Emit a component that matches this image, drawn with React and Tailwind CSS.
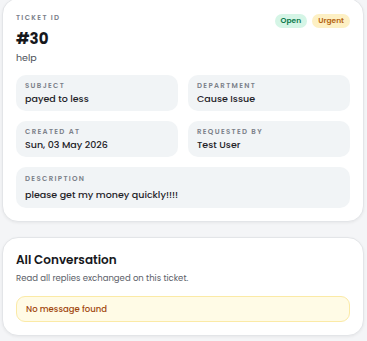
const FIELDS = [
  { label: "Subject", value: "payed to less" },
  { label: "Department", value: "Cause Issue" },
  { label: "Created At", value: "Sun, 03 May 2026" },
  { label: "Requested By", value: "Test User" },
];

const font = { fontFamily: "Poppins, Inter, 'Noto Sans', sans-serif" };

function Field({ label, value, wide }) {
  return (
    <div
      className={`rounded-[10px] bg-[#f1f4f6] px-[9px] ${
        wide ? "col-span-2 pt-[7px] pb-[7px]" : "pt-[6px] pb-[6px]"
      }`}
    >
      <p className="text-[7px] leading-[10px] font-semibold uppercase tracking-[0.19em] text-[#7b8089]">
        {label}
      </p>
      <p
        className={`text-[9.5px] leading-[13px] font-medium text-[#1f2328] ${
          wide ? "mt-[4px]" : "mt-[1px]"
        }`}
      >
        {value}
      </p>
    </div>
  );
}

export default function App() {
  return (
    <div className="w-[367px] h-[341px] overflow-hidden bg-[#f4f5f7] pl-[2px] pr-[3px]" style={font}>
      {/* Ticket details */}
      <div className="-mt-[2px] rounded-[16px] border border-[#e3e5e8] bg-white pl-[13px] pr-[13px] pt-[13px] pb-[13px] shadow-[0_1px_3px_rgba(0,0,0,0.06)]">
        <div className="flex items-start justify-between">
          <div>
            <p className="text-[7px] leading-[12px] font-semibold uppercase tracking-[0.19em] text-[#7b8089]">
              Ticket ID
            </p>
            <p className="mt-[4px] text-[15px] leading-[22px] font-bold text-[#16181c]">#30</p>
            <p className="mt-[1px] text-[9.5px] leading-[14px] text-[#4b5058]">help</p>
          </div>
          <div className="mt-[2px] flex items-center gap-[5px]">
            <span className="h-[14px] rounded-full bg-[#d5f5e6] px-[6px] text-[7.5px] leading-[14px] font-semibold text-[#0f7a4e]">
              Open
            </span>
            <span className="h-[14px] rounded-full bg-[#fdf0c4] px-[6px] text-[7.5px] leading-[14px] font-semibold text-[#b5640f]">
              Urgent
            </span>
          </div>
        </div>

        <div className="mt-[10px] grid grid-cols-2 gap-[10px]">
          {FIELDS.map((f) => (
            <Field key={f.label} label={f.label} value={f.value} />
          ))}
          <Field label="Description" value="please get my money quickly!!!!" wide />
        </div>
      </div>

      {/* Conversation */}
      <div className="mt-[15px] rounded-[16px] border border-[#e3e5e8] bg-white px-[13px] pt-[13px] pb-[13px] shadow-[0_1px_3px_rgba(0,0,0,0.06)]">
        <h2 className="text-[12px] leading-[18px] font-semibold text-[#16181c]">All Conversation</h2>
        <p className="mt-[3px] text-[8.5px] leading-[12px] text-[#5b6068]">
          Read all replies exchanged on this ticket.
        </p>
        <div className="mt-[12px] flex h-[26px] items-center rounded-[9px] border border-[#fbeaa6] bg-[#fffbe6] px-[9px]">
          <p className="text-[8.5px] font-medium text-[#a2480f]">No message found</p>
        </div>
      </div>
    </div>
  );
}
